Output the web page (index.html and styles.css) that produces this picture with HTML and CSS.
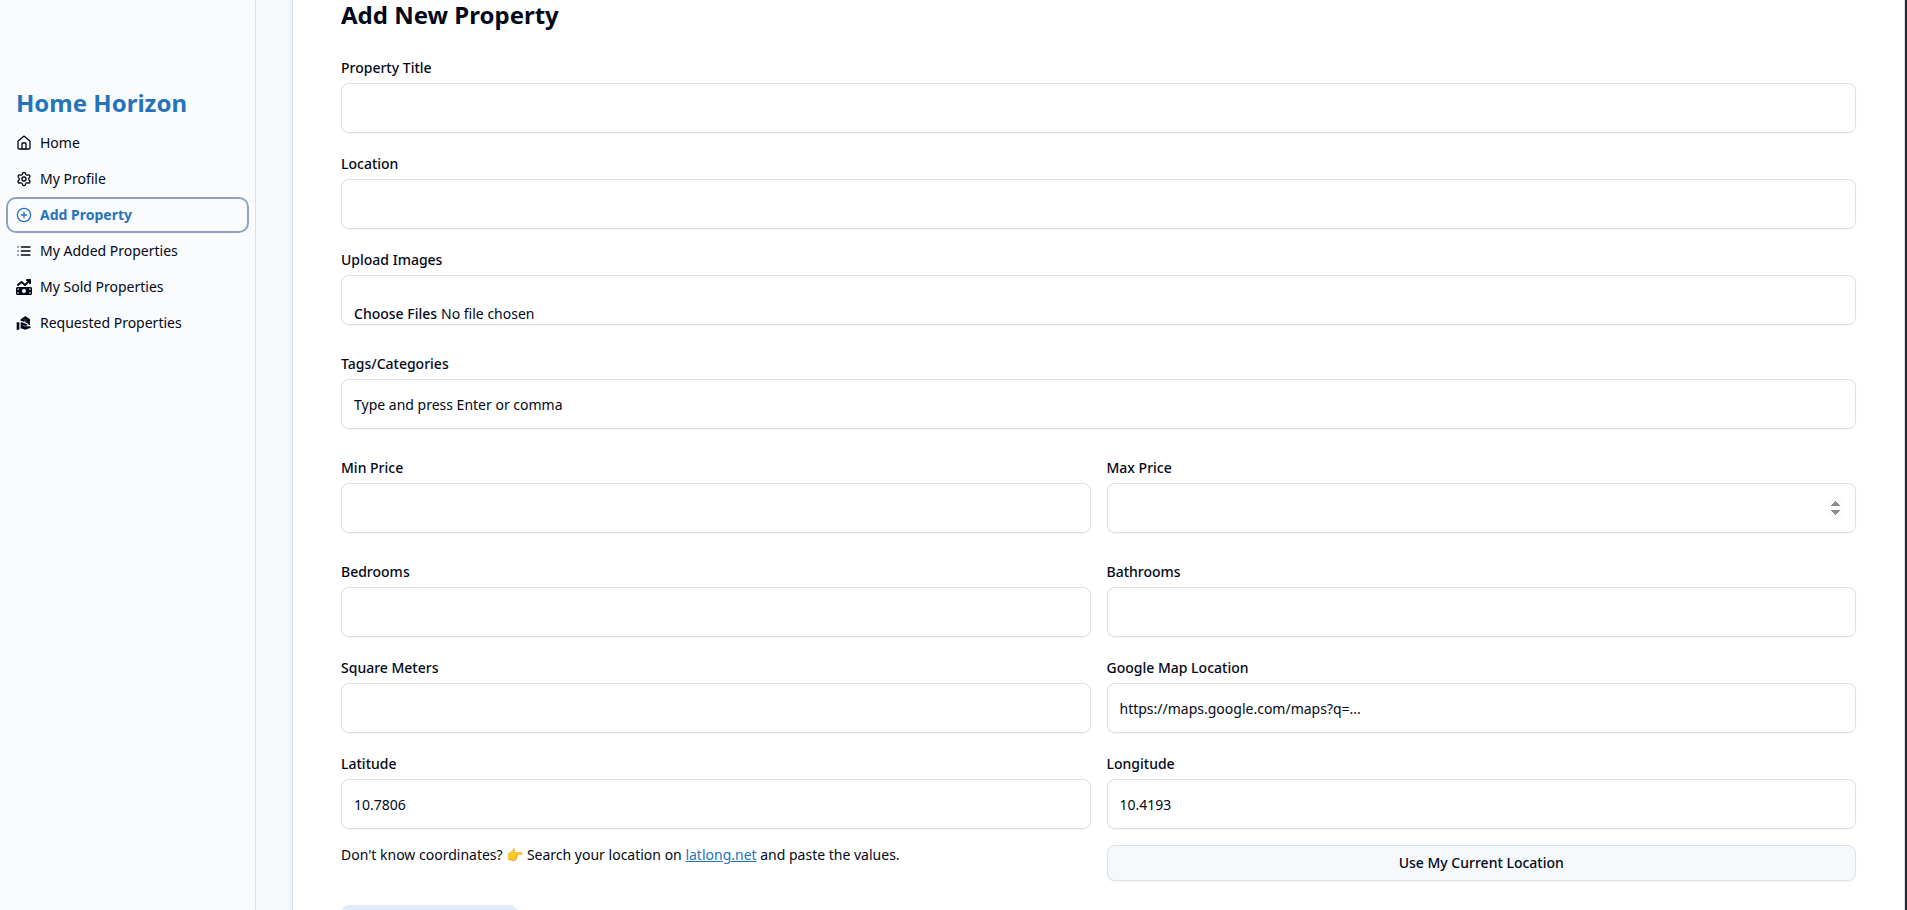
FILE: index.html
```html
<!DOCTYPE html>
<html lang="en">
<head>
<meta charset="utf-8">
<meta name="viewport" content="width=device-width, initial-scale=1">
<title>Home Horizon - Add New Property</title>
<link rel="stylesheet" href="styles.css">
</head>
<body>
<div class="layout">
  <aside class="sidebar">
    <h2 class="brand">Home Horizon</h2>
    <nav class="nav">
      <a class="nav-link" href="#home">
        <svg class="icon" viewBox="0 0 24 24"><path d="M15 21v-8a1 1 0 0 0-1-1h-4a1 1 0 0 0-1 1v8"/><path d="M3 10a2 2 0 0 1 .709-1.528l7-5.999a2 2 0 0 1 2.582 0l7 5.999A2 2 0 0 1 21 10v9a2 2 0 0 1-2 2H5a2 2 0 0 1-2-2z"/></svg>
        Home
      </a>
      <a class="nav-link" href="#profile">
        <svg class="icon" viewBox="0 0 24 24"><path d="M9.671 4.136a2.34 2.34 0 0 1 4.659 0 2.34 2.34 0 0 0 3.319 1.915 2.34 2.34 0 0 1 2.33 4.033 2.34 2.34 0 0 0 0 3.831 2.34 2.34 0 0 1-2.33 4.033 2.34 2.34 0 0 0-3.319 1.915 2.34 2.34 0 0 1-4.659 0 2.34 2.34 0 0 0-3.32-1.915 2.34 2.34 0 0 1-2.33-4.033 2.34 2.34 0 0 0 0-3.831A2.34 2.34 0 0 1 6.35 6.051a2.34 2.34 0 0 0 3.319-1.915"/><circle cx="12" cy="12" r="3"/></svg>
        My Profile
      </a>
      <a class="nav-link nav-link-active" href="#add" aria-current="page">
        <svg class="icon" viewBox="0 0 24 24"><circle cx="12" cy="12" r="10"/><path d="M8 12h8M12 8v8"/></svg>
        Add Property
      </a>
      <a class="nav-link" href="#added">
        <svg class="icon" viewBox="0 0 24 24"><path d="M3 12h.01M3 18h.01M3 6h.01M8 12h13M8 18h13M8 6h13"/></svg>
        My Added Properties
      </a>
      <a class="nav-link" href="#sold">
        <svg class="icon icon-solid" viewBox="0 0 512 512"><path d="M470.7 9.4c3 3.1 5.3 6.6 6.9 10.3s2.4 7.8 2.4 12.2l0 .1v0 96c0 17.7-14.3 32-32 32s-32-14.3-32-32V109.3L310.6 214.6c-11.8 11.8-30.8 12.6-43.5 1.7L176 138.1 84.8 216.3c-13.4 11.5-33.6 9.9-45.1-3.5s-9.9-33.6 3.5-45.1l112-96c12-10.3 29.7-10.3 41.7 0l89.5 76.7L370.7 64H352c-17.7 0-32-14.3-32-32s14.3-32 32-32h96 0c8.8 0 16.8 3.6 22.6 9.3l.1 .1zM0 304c0-26.5 21.5-48 48-48H464c26.5 0 48 21.5 48 48V464c0 26.5-21.5 48-48 48H48c-26.5 0-48-21.5-48-48V304zM48 416v48H96c0-26.5-21.5-48-48-48zM96 304H48v48c26.5 0 48-21.5 48-48zM464 416c-26.5 0-48 21.5-48 48h48V416zM416 304c0 26.5 21.5 48 48 48V304H416zm-96 80c0-35.3-28.7-64-64-64s-64 28.7-64 64s28.7 64 64 64s64-28.7 64-64z"/></svg>
        My Sold Properties
      </a>
      <a class="nav-link" href="#requested">
        <svg class="icon icon-solid" viewBox="0 0 24 24"><path d="M1 11h4v11H1zM20 17h-7l-2.09-.73.33-.94L13 16h2.82c.65 0 1.18-.53 1.18-1.18 0-.49-.31-.93-.77-1.11L8.97 11H7v9.02L14 22l8.01-3c-.01-1.1-.9-2-2.01-2z"/><path d="M14 1.5l-7 5V9h2l8.14 3.26A2.98 2.98 0 0 1 19 15h2V6.5l-7-5zM13.5 10h-1V9h1v1zm0-2h-1V7h1v1zm2 2h-1V9h1v1zm0-2h-1V7h1v1z"/></svg>
        Requested Properties
      </a>
    </nav>
  </aside>

  <main class="main">
    <section class="card">
      <h1 class="title">Add New Property</h1>
      <form class="form">
        <div class="field">
          <label class="label" for="title">Property Title</label>
          <input class="input" id="title" type="text">
        </div>
        <div class="field">
          <label class="label" for="location">Location</label>
          <input class="input" id="location" type="text">
        </div>
        <div class="field field-roomy">
          <label class="label" for="images">Upload Images</label>
          <input class="input input-file" id="images" type="file" multiple>
        </div>
        <div class="field field-roomy">
          <label class="label" for="tags">Tags/Categories</label>
          <input class="input" id="tags" type="text" placeholder="Type and press Enter or comma">
        </div>
        <div class="row">
          <div class="field field-roomy">
            <label class="label" for="min-price">Min Price</label>
            <input class="input" id="min-price" type="number">
          </div>
          <div class="field field-roomy">
            <label class="label" for="max-price">Max Price</label>
            <input class="input input-spin" id="max-price" type="number">
          </div>
        </div>
        <div class="row">
          <div class="field">
            <label class="label" for="bedrooms">Bedrooms</label>
            <input class="input" id="bedrooms" type="number">
          </div>
          <div class="field">
            <label class="label" for="bathrooms">Bathrooms</label>
            <input class="input" id="bathrooms" type="number">
          </div>
        </div>
        <div class="row">
          <div class="field">
            <label class="label" for="area">Square Meters</label>
            <input class="input" id="area" type="number">
          </div>
          <div class="field">
            <label class="label" for="map">Google Map Location</label>
            <input class="input" id="map" type="text" placeholder="https://maps.google.com/maps?q=...">
          </div>
        </div>
        <div class="row">
          <div class="field">
            <label class="label" for="lat">Latitude</label>
            <input class="input" id="lat" type="number" step="any" value="10.7806">
          </div>
          <div class="field">
            <label class="label" for="lng">Longitude</label>
            <input class="input" id="lng" type="number" step="any" value="10.4193">
          </div>
          <p class="hint">Don't know coordinates? 👉 Search your location on <a class="link" href="#latlong">latlong.net</a> and paste the values.</p>
          <button class="btn btn-outline" type="button">Use My Current Location</button>
        </div>
        <button class="btn btn-submit" type="submit" aria-label="Submit"></button>
      </form>
    </section>
  </main>
</div>
</body>
</html>
```
FILE: styles.css
```css
* {
  box-sizing: border-box;
}

body {
  margin: 0;
  color: #020817;
  background: #f5f9fc;
  font-family: "Noto Sans", sans-serif;
  font-size: 14px;
  line-height: 20px;
}

h1, h2, p {
  margin: 0;
}

.layout {
  display: flex;
  height: 100vh;
  overflow: hidden;
  border-right: 2px solid #26292d;
}

.sidebar {
  flex: none;
  width: 256px;
  padding: 87px 8px 8px;
  background: #fafbfd;
  border-right: 1px solid #dbdfe6;
}

.brand {
  padding: 0 8px;
  color: #2574bb;
  font-size: 24px;
  font-weight: 700;
  line-height: 32px;
}

.nav {
  display: flex;
  flex-direction: column;
  gap: 4px;
  margin-top: 8px;
}

.nav-link {
  display: flex;
  align-items: center;
  gap: 8px;
  height: 32px;
  padding: 0 8px;
  border-radius: 8px;
  color: inherit;
  text-decoration: none;
}

.nav-link-active {
  color: #2574bb;
  font-weight: 700;
  box-shadow: 0 0 0 2px #8fa3c0;
}

.icon {
  flex: none;
  width: 16px;
  height: 16px;
  fill: none;
  stroke: currentColor;
  stroke-width: 2;
  stroke-linecap: round;
  stroke-linejoin: round;
}

.icon-solid {
  fill: currentColor;
  stroke: none;
}

.main {
  flex: 1;
  min-width: 0;
  padding-left: 36px;
}

.card {
  padding: 0 48px 48px;
  background: #fff;
  border: solid #dbe1ea;
  border-width: 0 1px;
  box-shadow: 0 1px 3px rgba(15, 40, 80, 0.12);
}

.title {
  font-size: 24px;
  font-weight: 700;
  line-height: 29px;
}

.form {
  display: flex;
  flex-direction: column;
  gap: 24px;
  margin-top: 32px;
}

.row {
  display: grid;
  grid-template-columns: 1fr 1fr;
  gap: 16px;
  align-items: start;
}

.field {
  display: flex;
  flex-direction: column;
  gap: 8px;
}

.field-roomy {
  padding-bottom: 8px;
}

.label {
  font-weight: 500;
  line-height: 14px;
}

.input {
  width: 100%;
  height: 50px;
  padding: 8px 12px;
  color: inherit;
  background: #fff;
  border: 1px solid #dbe1e8;
  border-radius: 8px;
  box-shadow: 0 1px 2px rgba(0, 0, 0, 0.05);
  font: inherit;
  outline: none;
}

.input::placeholder {
  color: inherit;
  opacity: 1;
}

.input::-webkit-inner-spin-button {
  opacity: 0;
}

.input-spin::-webkit-inner-spin-button {
  opacity: 1;
}

.input-file {
  padding: 28px 12px 0;
}

.input-file::file-selector-button {
  margin: 0 4px 0 0;
  padding: 0;
  color: inherit;
  background: transparent;
  border: 0;
  font: inherit;
  font-weight: 500;
}

.link {
  color: #2574bb;
}

.btn {
  height: 36px;
  padding: 0 16px;
  color: inherit;
  border: 1px solid #dbe1e8;
  border-radius: 8px;
  font: inherit;
  font-weight: 500;
}

.btn-outline {
  background: #f5f9fc;
  box-shadow: 0 1px 2px rgba(0, 0, 0, 0.05);
}

.btn-submit {
  align-self: flex-start;
  min-width: 177px;
  background: #e0edf9;
  border-color: #e0edf9;
}
```
